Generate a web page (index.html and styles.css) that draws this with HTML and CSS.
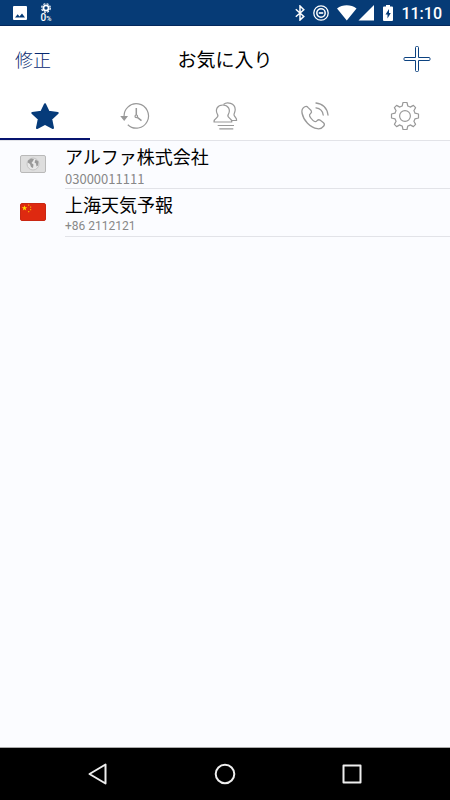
FILE: index.html
```html
<!DOCTYPE html>
<html lang="ja">
<head>
    <meta charset="UTF-8">
    <meta name="viewport" content="width=device-width, initial-scale=1.0">
    <title>お気に入り</title>
    <link rel="stylesheet" href="styles.css">
</head>
<body>

<div class="status-bar">
    <div class="status-left">
        <svg width="14" height="14" viewBox="0 0 14 14">
            <path fill="#fff" fill-rule="evenodd" d="M1 0h12a1 1 0 0 1 1 1v12a1 1 0 0 1-1 1H1a1 1 0 0 1-1-1V1a1 1 0 0 1 1-1zM2 11.500h10L9 7.500 6.500 10.500 4.700 8.300z"/>
        </svg>
        <div class="weather">
            <svg width="12" height="10" viewBox="0 0 12 10" fill="none" stroke="#fff">
                <circle cx="6" cy="5" r="4.300" stroke-width="1.200" stroke-dasharray="2 1.400"/>
                <circle cx="6" cy="5" r="2.600" stroke-width="1.800"/>
            </svg>
            <span class="weather-value">0<small>%</small></span>
        </div>
    </div>
    <div class="status-right">
        <svg width="10" height="16" viewBox="0 0 10 16" fill="none" stroke="#fff" stroke-width="1.500">
            <path d="M.8 4.300 8.800 11.400 5 15V1l3.800 3.700L.8 11.800"/>
        </svg>
        <svg width="16" height="16" viewBox="0 0 16 16" fill="none" stroke="#fff">
            <circle cx="8" cy="8" r="7.200" stroke-width="1.300"/>
            <circle cx="8" cy="8" r="4.200" stroke-width="1.500"/>
            <path d="M5.800 8h4.400" stroke-width="1.600"/>
        </svg>
        <svg width="38" height="16" viewBox="0 0 38 16" fill="#fff">
            <path d="M0 3.500C5.500-.8 14-.8 19.500 3.500L9.800 15.500z"/>
            <path d="M37 0v15.500H21.500z"/>
        </svg>
        <svg width="10" height="16" viewBox="0 0 10 16">
            <path fill="#fff" fill-rule="evenodd" d="M3 0h4v1.500h2a1 1 0 0 1 1 1V15a1 1 0 0 1-1 1H1a1 1 0 0 1-1-1V2.500a1 1 0 0 1 1-1h2zM6 4 2.500 9.500h2V13.500L7.800 8H6z"/>
        </svg>
        <span class="clock">11:10</span>
    </div>
</div>

<header class="header">
    <button type="button" class="btn-edit">修正</button>
    <h1 class="title">お気に入り</h1>
    <button type="button" class="btn-add" aria-label="追加">
        <svg width="28" height="28" viewBox="0 0 28 28" fill="none" stroke="#0c4280" stroke-width="1">
            <path d="M13.500 1.500h1a1 1 0 0 1 1 1v10h10.500a1 1 0 0 1 1 1v1a1 1 0 0 1-1 1H15.500v10a1 1 0 0 1-1 1h-1a1 1 0 0 1-1-1v-10H2a1 1 0 0 1-1-1v-1a1 1 0 0 1 1-1h10.500v-10a1 1 0 0 1 1-1z"/>
        </svg>
    </button>
</header>

<nav class="tabs">
    <a href="#favorites" class="tab active" aria-label="お気に入り">
        <svg width="30" height="30" viewBox="0 0 30 30">
            <path fill="#063b7a" stroke="#063b7a" stroke-width="2" stroke-linejoin="round" d="M15 3.200 18.600 10.700 27.700 12 21.200 18 23 27 15 22.800 7 27 8.800 18 2.300 12 11.400 10.700z"/>
        </svg>
    </a>
    <a href="#history" class="tab" aria-label="履歴">
        <svg width="30" height="30" viewBox="0 0 30 30" fill="none" stroke="#999" stroke-width="1.200">
            <path d="M4.200 16.500A12.200 12.200 0 1 1 7.800 23.700"/>
            <path fill="#999" d="M1.500 15.700h5.300L4.200 19z"/>
            <path stroke-width="1.500" d="M16.300 7v7M17.300 16.300l4.200 3.400"/>
            <circle cx="16.300" cy="15.300" r="1.300"/>
        </svg>
    </a>
    <a href="#contacts" class="tab" aria-label="連絡先">
        <svg width="30" height="30" viewBox="0 0 30 30" fill="none" stroke="#999" stroke-width="1.200" stroke-linejoin="round">
            <path d="M4 21c-.3-2.300.7-2.900 2.600-4.200 1.300-1 1.700-2 1-3.200C4.700 8.500 7.500 4 12.800 4s8.300 4.500 5.400 9.600c-.7 1.200-.3 2.200 1 3.200 1.900 1.300 2.900 1.900 2.600 4.200z"/>
            <path d="M13.500 3.500c3.500-3 11.500-1.500 11.700 5 .1 2.200-1.200 3.700-1.200 5.200 0 2.300 3 2.500 2.600 5.800H22"/>
            <path d="M7.700 24.500h16.300M9.300 27.800h14"/>
        </svg>
    </a>
    <a href="#dial" class="tab" aria-label="電話">
        <svg width="30" height="30" viewBox="0 0 30 30" fill="none" stroke="#999" stroke-width="1.300" stroke-linecap="round" stroke-linejoin="round">
            <path d="M4.700 5.800C2.500 7 1.500 9 2 12 3.500 19.500 10 26.500 17.500 27.700c2.500.4 4.700-.7 6.300-2.700 1-1.300.8-2.200-.3-3.200l-3.200-2.500c-1.300-1-2.300-.7-3.200.3-1.300 1.600-2.500 1.400-4.200-.2-1.500-1.400-2.700-2.800-3.300-4.300-.5-1.300.1-2 1.200-2.900.8-.7 1-1.600.3-2.700L7.900 6.400c-.8-1.200-1.900-1.400-3.200-.6z"/>
            <path d="M16 2c6.300.5 11.200 5 12 12M16 6.800c4 .5 6.700 3 7.200 7.200"/>
        </svg>
    </a>
    <a href="#settings" class="tab" aria-label="設定">
        <svg width="30" height="30" viewBox="0 0 30 30" fill="none" stroke="#999" stroke-width="1.200" stroke-linejoin="round">
            <path d="M13 1.500h4l.8 3.500q1.300.4 2.400 1.100l3.200-1.700 2.200 2.200-1.700 3.200q.7 1.100 1.100 2.400l3.500.8v4l-3.500.8q-.4 1.300-1.100 2.400l1.700 3.200-2.200 2.200-3.200-1.700q-1.100.7-2.400 1.100l-.8 3.500h-4l-.8-3.500q-1.300-.4-2.400-1.100l-3.200 1.700-2.200-2.200 1.700-3.200q-.7-1.100-1.100-2.400L1.500 17v-4l3.500-.8q.4-1.300 1.100-2.400L4.400 6.600 6.600 4.400l3.200 1.700q1.100-.7 2.400-1.100z"/>
            <circle cx="15" cy="15" r="5.400"/>
        </svg>
    </a>
</nav>

<main class="content">
    <ul class="contact-list">
        <li class="contact">
            <svg class="flag" width="26" height="18" viewBox="0 0 26 18">
                <rect x=".5" y=".5" width="25" height="17" rx="1.500" fill="#dedede" stroke="#b9b9b9"/>
                <circle cx="13" cy="9" r="6" fill="#e8e8e8" stroke="#c4c4c4"/>
                <path fill="#999" d="M8 5.500 11 3.500l3 .5-1 2-1.500 2 2 1.500L13 13l-2-1-1-3-2.300-1.500zM15.500 4.500l3 2-.5 4-1.500 1-.5-3-1.500-1z"/>
            </svg>
            <a href="tel:03000011111" class="contact-info">
                <span class="name">アルファ株式会社</span>
                <span class="number number-cjk">03000011111</span>
            </a>
        </li>
        <li class="contact">
            <svg class="flag" width="26" height="18" viewBox="0 0 26 18">
                <rect x=".5" y=".5" width="25" height="17" rx="1.500" fill="#de2910" stroke="#c92713"/>
                <path fill="#ffde00" d="M4.500 2.200 5.200 4.200H7.300L5.600 5.500 6.200 7.500 4.500 6.300 2.800 7.500 3.400 5.500 1.700 4.200H3.800z"/>
                <path fill="#f5a300" d="M8 1.500h1.300v1.300H8zM10 3.500h1.200v1.200H10zM10 6h1.200v1.200H10zM8 8h1.300v1.200H8z"/>
            </svg>
            <a href="tel:+862112121" class="contact-info">
                <span class="name">上海天気予報</span>
                <span class="number">+86 2112121</span>
            </a>
        </li>
    </ul>
</main>

<footer class="nav-bar">
    <button type="button" class="nav-btn" aria-label="戻る">
        <svg width="22" height="22" viewBox="0 0 22 22" fill="none" stroke="#eee" stroke-width="2" stroke-linejoin="round">
            <path d="M18.500 1.500v19L2.500 11z"/>
        </svg>
    </button>
    <button type="button" class="nav-btn" aria-label="ホーム">
        <svg width="22" height="22" viewBox="0 0 22 22" fill="none" stroke="#eee" stroke-width="2">
            <circle cx="11" cy="11" r="9.300"/>
        </svg>
    </button>
    <button type="button" class="nav-btn" aria-label="履歴一覧">
        <svg width="22" height="22" viewBox="0 0 22 22" fill="none" stroke="#eee" stroke-width="2" stroke-linejoin="round">
            <path d="M2.500 2.500h17v17h-17z"/>
        </svg>
    </button>
</footer>

</body>
</html>
```

FILE: styles.css
```css
* {
    margin: 0;
    padding: 0;
    box-sizing: border-box;
}

body {
    font-family: "Noto Sans CJK JP", sans-serif;
    background-color: #fbfcff;
    color: #000;
    min-height: 100vh;
    display: flex;
    flex-direction: column;
}

svg {
    display: block;
    flex-shrink: 0;
}

button {
    background: none;
    border: none;
    font-family: inherit;
    cursor: pointer;
}

a {
    color: inherit;
    text-decoration: none;
}

/* Status bar */
.status-bar {
    height: 26px;
    padding: 0 8px 0 13px;
    background-color: #063b76;
    border-bottom: 1px solid #04285c;
    color: #fff;
    display: flex;
    justify-content: space-between;
    align-items: center;
    font-family: Roboto, sans-serif;
}

.status-left {
    display: flex;
    align-items: center;
    gap: 13px;
}

.weather {
    display: flex;
    flex-direction: column;
    align-items: center;
    padding-top: 1px;
}

.weather-value {
    font-size: 10px;
    line-height: 10px;
    font-weight: 500;
}

.weather-value small {
    font-size: 7px;
}

.status-right {
    display: flex;
    align-items: center;
    gap: 8px;
}

.clock {
    padding-top: 2px;
    font-size: 16px;
    line-height: 24px;
    font-weight: 500;
}

/* Header */
.header {
    height: 66px;
    padding: 0 15px;
    background-color: #fff;
    display: grid;
    grid-template-columns: 1fr auto 1fr;
    align-items: center;
}

.btn-edit {
    justify-self: start;
    color: #06286f;
    font-size: 18px;
    font-weight: 300;
    line-height: 24px;
}

.title {
    font-size: 19px;
    font-weight: 400;
    line-height: 24px;
}

.btn-add {
    justify-self: end;
    padding-right: 4px;
}

/* Tabs */
.tabs {
    height: 49px;
    background-color: #fff;
    border-bottom: 1px solid #e2e3e8;
    display: flex;
}

.tab {
    flex: 1;
    display: flex;
    justify-content: center;
    align-items: center;
    padding-top: 2px;
    border-bottom: 2px solid transparent;
}

.tab.active {
    border-bottom-color: #06146f;
}

/* Contact list */
.content {
    flex: 1;
}

.contact-list {
    list-style: none;
}

.contact {
    display: flex;
    gap: 19px;
    padding-left: 20px;
}

.flag {
    margin-top: 14px;
}

.contact-info {
    flex: 1;
    height: 48px;
    padding-top: 2px;
    border-bottom: 1px solid #e2e3e8;
}

.name,
.number {
    display: block;
}

.name {
    font-size: 18px;
    line-height: 26px;
}

.number {
    color: #888;
    font-family: Roboto, sans-serif;
    font-size: 12px;
    line-height: 19px;
}

.number-cjk {
    font-family: "Noto Sans CJK JP", sans-serif;
    font-size: 13px;
}

/* Navigation bar */
.nav-bar {
    height: 53px;
    padding: 0 35px;
    background-color: #000;
    border-top: 1px solid #aaa;
    display: flex;
}

.nav-btn {
    flex: 1;
    display: flex;
    justify-content: center;
    align-items: center;
}
```
